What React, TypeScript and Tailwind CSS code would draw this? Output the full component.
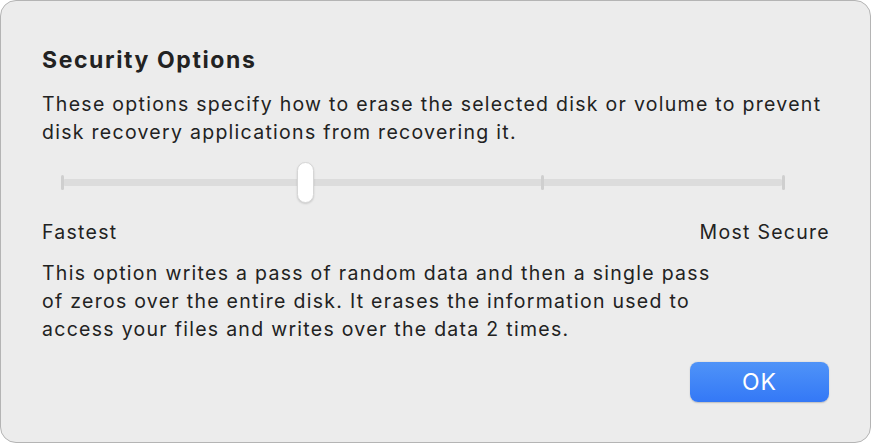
export default function App() {
  const ticks = [0, 1, 2, 3];
  return (
    <div className="w-[872px] h-[444px] bg-white">
      <div
        className="w-[871px] h-[443px] rounded-[16px] border border-[#b4b4b4] bg-[#ececec] text-[#222222] px-[41px] pt-[44px]"
        style={{ fontFamily: "Inter, 'Liberation Sans', sans-serif" }}
      >
        <h1 className="text-[23px] font-bold leading-[30px] tracking-[1.6px]">Security Options</h1>
        <p className="mt-[15px] text-[19.5px] leading-[28px] tracking-[1.28px]">
          These options specify how to erase the selected disk or volume to prevent
          <br />
          disk recovery applications from recovering it.
        </p>

        <div className="relative mt-[15px] ml-[20px] mr-[46px] h-[44px]">
          <div className="absolute left-0 right-0 top-[18px] h-[7px] rounded-full bg-[#dcdcdc]" />
          {ticks.map((t) => (
            <div
              key={t}
              className="absolute top-[14px] w-[3px] h-[15px] rounded-full bg-[#cfcfcf]"
              style={{ left: `calc(${(t / 3) * 100}% - 1.5px)` }}
            />
          ))}
          <div className="absolute top-[1px] left-[235px] w-[17px] h-[41px] rounded-full bg-white border border-[#d6d6d6] shadow-[0_1px_2px_rgba(0,0,0,0.15)]" />
        </div>

        <div className="mt-[13px] flex justify-between text-[19.5px] leading-[28px] tracking-[1.28px]">
          <span>Fastest</span>
          <span className="-mr-[1px]">Most Secure</span>
        </div>

        <p className="mt-[13px] text-[19.5px] leading-[28px] tracking-[1.28px]">
          This option writes a pass of random data and then a single pass
          <br />
          of zeros over the entire disk. It erases the information used to
          <br />
          access your files and writes over the data 2 times.
        </p>

        <div className="mt-[19px] flex justify-end">
          <button className="w-[139px] h-[40px] rounded-[8px] bg-gradient-to-b from-[#4f93f8] to-[#3478f6] text-white text-[23px] tracking-[1px] leading-none shadow-[0_0.5px_1.5px_rgba(0,0,0,0.2)]">
            OK
          </button>
        </div>
      </div>
    </div>
  );
}
